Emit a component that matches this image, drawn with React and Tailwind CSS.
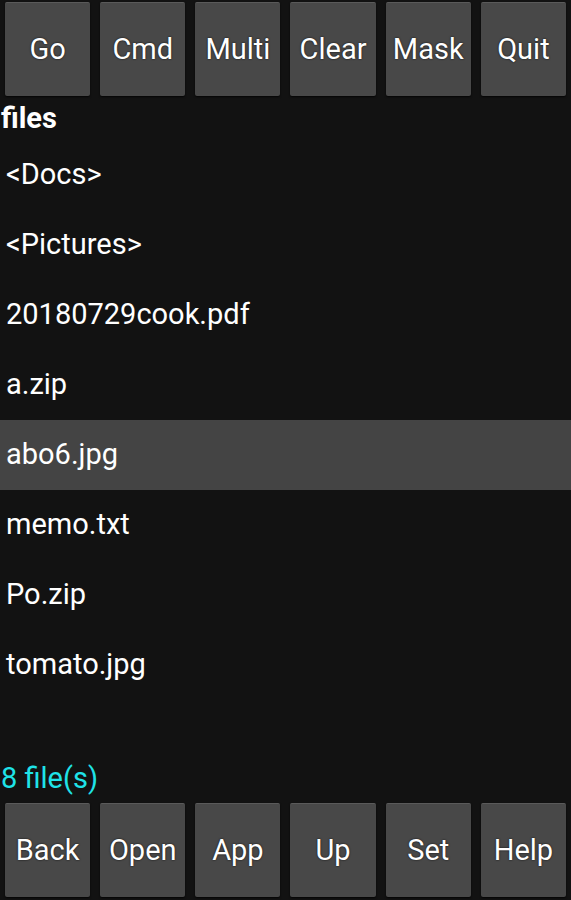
import React from "react";

const top = ["Go", "Cmd", "Multi", "Clear", "Mask", "Quit"];
const bottom = ["Back", "Open", "App", "Up", "Set", "Help"];
const files = ["<Docs>", "<Pictures>", "20180729cook.pdf", "a.zip", "abo6.jpg", "memo.txt", "Po.zip", "tomato.jpg"];

function Btn({ label }) {
  return (
    <div className="flex h-[94px] items-center justify-center rounded-[2px] border-t border-[#5a5a5a] bg-[#484848] text-[29px] text-white shadow-[0_1px_2px_rgba(0,0,0,0.8)] [text-shadow:0_0_2px_rgba(0,0,0,0.9)]">
      {label}
    </div>
  );
}

export default function App() {
  return (
    <div
      className="flex h-[900px] w-[571px] flex-col bg-[#121212] text-white"
      style={{ fontFamily: "Roboto, 'Noto Sans', sans-serif" }}
    >
      <div className="grid grid-cols-6 gap-x-[10px] px-[5px] pt-[2px]">
        {top.map((t) => (
          <Btn key={t} label={t} />
        ))}
      </div>
      <div className="flex h-[44px] items-center pl-[1px] text-[29px] font-bold leading-none">files</div>
      <div className="flex flex-col">
        {files.map((f) => (
          <div
            key={f}
            className={`flex h-[70px] items-center pl-[6px] text-[29px] ${f === "abo6.jpg" ? "bg-[#444444]" : ""}`}
          >
            {f}
          </div>
        ))}
      </div>
      <div className="flex-1" />
      <div className="flex h-[36px] items-center pl-[1px] text-[29px] text-[#1fe3e8]">8 file(s)</div>
      <div className="grid grid-cols-6 gap-x-[10px] px-[5px] pt-[6px] pb-[3px]">
        {bottom.map((t) => (
          <Btn key={t} label={t} />
        ))}
      </div>
    </div>
  );
}
